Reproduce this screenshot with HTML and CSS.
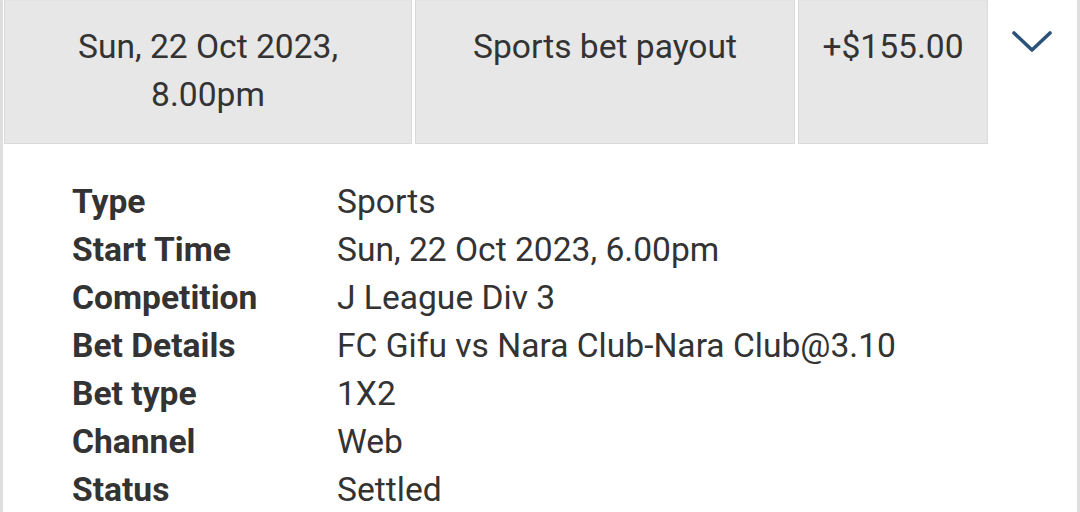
FILE: index.html
```html
<!DOCTYPE html>
<html lang="en">
<head>
    <meta charset="UTF-8">
    <meta name="viewport" content="width=device-width, initial-scale=1.0">
    <title>Transaction Details</title>
    <link rel="stylesheet" href="styles.css">
</head>
<body>

    <!-- Transaction row (expanded) -->
    <div class="txn">
        <div class="txn-head">
            <div class="cell cell-date">Sun, 22 Oct 2023,<br>8.00pm</div>
            <div class="cell cell-desc">Sports bet payout</div>
            <div class="cell cell-amount">+$155.00</div>
            <div class="cell-toggle">
                <svg class="chevron" viewBox="0 0 40 22" xmlns="http://www.w3.org/2000/svg">
                    <path d="M2 2 L20 19 L38 2" fill="none" stroke="#2b5379" stroke-width="3.6" stroke-linecap="round" stroke-linejoin="round" />
                </svg>
            </div>
        </div>

        <dl class="txn-details">
            <dt>Type</dt><dd>Sports</dd>
            <dt>Start Time</dt><dd>Sun, 22 Oct 2023, 6.00pm</dd>
            <dt>Competition</dt><dd>J League Div 3</dd>
            <dt>Bet Details</dt><dd>FC Gifu vs Nara Club-Nara Club@3.10</dd>
            <dt>Bet type</dt><dd>1X2</dd>
            <dt>Channel</dt><dd>Web</dd>
            <dt>Status</dt><dd>Settled</dd>
        </dl>
    </div>

</body>
</html>
```

FILE: styles.css
```css
/* --- General --- */
body {
    margin: 0;
    background: #fff;
    font-family: Roboto, "Noto Sans", Arial, sans-serif;
    color: #333;
}

.txn {
    border-left: 3px solid #dedede;
    border-right: 3px solid #dedede;
    width: 1074px;
    min-height: 512px;
}

/* --- Header row --- */
.txn-head {
    display: flex;
    gap: 3px;
    padding-left: 1px;
    height: 144px;
}

.cell {
    background: #e7e7e7;
    border: 1px solid #dadada;
    border-top-color: #e2e2e2;
    font-size: 33.6px;
    line-height: 48px;
    text-align: center;
    padding-top: 22px;
    box-sizing: border-box;
}

.cell-date { width: 408px; }
.cell-desc { width: 380px; }
.cell-amount { width: 190px; }

.cell-toggle {
    flex: 1;
    display: flex;
    justify-content: center;
    padding-top: 31px;
    padding-right: 4px;
}

.chevron {
    width: 40px;
    height: 22px;
}

/* --- Details list --- */
.txn-details {
    display: grid;
    grid-template-columns: 265px 1fr;
    margin: 0;
    padding: 34px 0 0 69px;
    font-size: 33.6px;
    line-height: 48px;
}

.txn-details dt {
    font-weight: 700;
}

.txn-details dd {
    margin: 0;
}
```
